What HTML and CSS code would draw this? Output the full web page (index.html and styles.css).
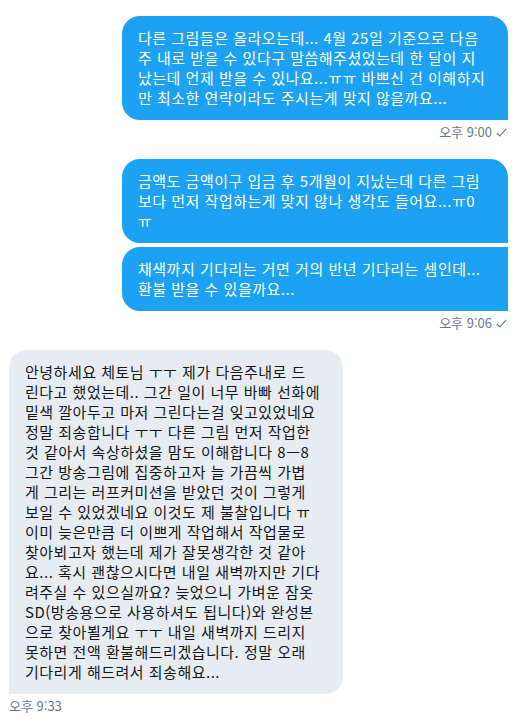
FILE: index.html
```html
<!DOCTYPE html>
<html lang="ko">
<head>
    <meta charset="UTF-8">
    <meta name="viewport" content="width=device-width, initial-scale=1.0">
    <title>메시지</title>
    <link rel="stylesheet" href="styles.css">
</head>
<body>
    <div class="thread">
        <!-- 보낸 메시지 -->
        <div class="group sent">
            <div class="bubble single">
                다른 그림들은 올라오는데... 4월 25일 기준으로 다음<br>
                주 내로 받을 수 있다구 말씀해주셨었는데 한 달이 지<br>
                났는데 언제 받을 수 있나요...ㅠㅠ 바쁘신 건 이해하지<br>
                만 최소한 연락이라도 주시는게 맞지 않을까요...
            </div>
            <div class="meta">
                오후 9:00
                <svg class="check" width="11" height="9" viewBox="0 0 11 9"><path d="M0.8 5 L3.8 8 L10.2 0.8" fill="none" stroke="#657786" stroke-width="1.1"/></svg>
            </div>
        </div>

        <div class="group sent">
            <div class="bubble first">
                금액도 금액이구 입금 후 5개월이 지났는데 다른 그림<br>
                보다 먼저 작업하는게 맞지 않나 생각도 들어요...ㅠ0<br>
                ㅠ
            </div>
            <div class="bubble last">
                채색까지 기다리는 거면 거의 반년 기다리는 셈인데...<br>
                환불 받을 수 있을까요...
            </div>
            <div class="meta">
                오후 9:06
                <svg class="check" width="11" height="9" viewBox="0 0 11 9"><path d="M0.8 5 L3.8 8 L10.2 0.8" fill="none" stroke="#657786" stroke-width="1.1"/></svg>
            </div>
        </div>

        <!-- 받은 메시지 -->
        <div class="group received">
            <div class="bubble">
                안녕하세요 체토님 ㅜㅜ 제가 다음주내로 드<br>
                린다고 했었는데.. 그간 일이 너무 바빠 선화에<br>
                밑색 깔아두고 마저 그린다는걸 잊고있었네요<br>
                정말 죄송합니다 ㅜㅜ 다른 그림 먼저 작업한<br>
                것 같아서 속상하셨을 맘도 이해합니다 8ㅡ8<br>
                그간 방송그림에 집중하고자 늘 가끔씩 가볍<br>
                게 그리는 러프커미션을 받았던 것이 그렇게<br>
                보일 수 있었겠네요 이것도 제 불찰입니다 ㅠ<br>
                이미 늦은만큼 더 이쁘게 작업해서 작업물로<br>
                찾아뵈고자 했는데 제가 잘못생각한 것 같아<br>
                요... 혹시 괜찮으시다면 내일 새벽까지만 기다<br>
                려주실 수 있으실까요? 늦었으니 가벼운 잠옷<br>
                SD(방송용으로 사용하셔도 됩니다)와 완성본<br>
                으로 찾아뵐게요 ㅜㅜ 내일 새벽까지 드리지<br>
                못하면 전액 환불해드리겠습니다. 정말 오래<br>
                기다리게 해드려서 죄송해요...
            </div>
            <div class="meta">오후 9:33</div>
        </div>
    </div>
</body>
</html>
```

FILE: styles.css
```css
body {
    margin: 0;
    background: #ffffff;
    font-family: "Noto Sans CJK KR", "Noto Sans", sans-serif;
}

.thread {
    display: flex;
    flex-direction: column;
    gap: 19px;
    padding: 16px 12px 0 9px;
}

.group {
    display: flex;
    flex-direction: column;
    gap: 4px;
}

.group.sent {
    align-items: flex-end;
}

.group.received {
    align-items: flex-start;
}

.bubble {
    box-sizing: border-box;
    padding: 12px 16px;
    font-size: 15px;
    line-height: 20px;
    letter-spacing: 0.5px;
    white-space: nowrap;
}

.sent .bubble {
    width: 386px;
    background-color: #1da1f2;
    color: #ffffff;
    border-radius: 18px 18px 0 18px;
}

.sent .bubble.last {
    border-radius: 18px 0 0 18px;
}

.received .bubble {
    width: 334px;
    background-color: #e6ecf0;
    color: #14171a;
    border-radius: 18px 18px 18px 0;
}

.meta {
    display: flex;
    align-items: center;
    gap: 4px;
    height: 16px;
    font-size: 13px;
    line-height: 16px;
    color: #657786;
}

.sent .meta {
    padding-right: 1px;
}

.check {
    display: block;
}
```
